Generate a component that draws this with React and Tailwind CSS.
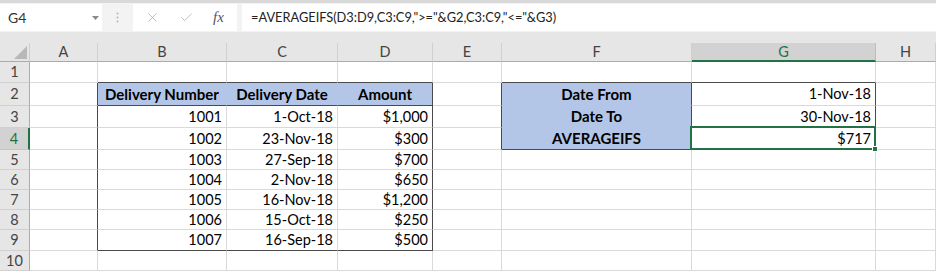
import React from 'react';
import { X, Check } from 'lucide-react';

const COLS = ['A', 'B', 'C', 'D', 'E', 'F', 'G', 'H'];
const COL_W = ['w-[68px]', 'w-[129px]', 'w-[111px]', 'w-[95px]', 'w-[69px]', 'w-[190px]', 'w-[184px]', 'w-[60px]'];
const ROW_H = ['h-[21px]', 'h-[23px]', 'h-[22px]', 'h-[22px]', 'h-[20px]', 'h-[20px]', 'h-[20px]', 'h-[20px]', 'h-[21px]', 'h-[20px]'];

const deliveries = [
  ['1001', '1-Oct-18', '$1,000'],
  ['1002', '23-Nov-18', '$300'],
  ['1003', '27-Sep-18', '$700'],
  ['1004', '2-Nov-18', '$650'],
  ['1005', '16-Nov-18', '$1,200'],
  ['1006', '15-Oct-18', '$250'],
  ['1007', '16-Sep-18', '$500'],
];

// what sits in each cell: text, bold, align, blue fill
const cellAt = (r, c) => {
  if (r === 2 && c >= 1 && c <= 3) {
    return { text: ['Delivery Number', 'Delivery Date', 'Amount'][c - 1], bold: true, align: 'center', fill: true };
  }
  if (r >= 3 && r <= 9 && c >= 1 && c <= 3) {
    return { text: deliveries[r - 3][c - 1], align: 'right' };
  }
  if (r >= 2 && r <= 4 && c === 5) {
    return { text: ['Date From', 'Date To', 'AVERAGEIFS'][r - 2], bold: true, align: 'center', fill: true };
  }
  if (r >= 2 && r <= 4 && c === 6) {
    return { text: ['1-Nov-18', '30-Nov-18', '$717'][r - 2], align: 'right' };
  }
  return { text: '' };
};

// border colours: 'dark' for the table outlines, 'blue' inside filled blocks
const rightEdge = (r, c) => {
  if ((c === 0 || c === 3) && r >= 2 && r <= 9) return 'dark';
  if ((c === 4 || c === 5 || c === 6) && r >= 2 && r <= 4) return 'dark';
  if (r === 2 && (c === 1 || c === 2)) return 'blue';
  return 'grid';
};

const bottomEdge = (r, c) => {
  if ((r === 1 || r === 2 || r === 9) && c >= 1 && c <= 3) return 'dark';
  if ((r === 1 || r === 4) && (c === 5 || c === 6)) return 'dark';
  if ((r === 2 || r === 3) && c === 5) return 'blue';
  return 'grid';
};

const R_CLS = { dark: 'border-r-[#4a4a4a]', blue: 'border-r-[#b4c6e7]', grid: 'border-r-[#d9d9d9]' };
const B_CLS = { dark: 'border-b-[#4a4a4a]', blue: 'border-b-[#b4c6e7]', grid: 'border-b-[#d9d9d9]' };

const FormulaBar = () => (
  <div className="bg-[#e6e6e6]">
    <div className="h-[3px] bg-[#d9d9d9]" />
    <div className="h-[29px] bg-[#f3f3f3] flex items-center text-[14px] text-[#333]">
      <div className="w-[102px] h-[27px] bg-white flex items-center justify-between pl-[8px] pr-[3px]">
        <span>G4</span>
        <svg width="7" height="4" viewBox="0 0 7 4"><polygon points="0,0 7,0 3.5,4" fill="#8a8a8a" /></svg>
      </div>
      <div className="w-[31px] flex justify-center">
        <svg width="3" height="11" viewBox="0 0 3 11">
          <circle cx="1.5" cy="1.5" r="1" fill="#b5b5b5" />
          <circle cx="1.5" cy="5.5" r="1" fill="#b5b5b5" />
          <circle cx="1.5" cy="9.5" r="1" fill="#b5b5b5" />
        </svg>
      </div>
      <div className="w-[104px] h-[27px] bg-white flex items-center pl-[12px] gap-[19px]">
        <X size={15} strokeWidth={1.2} color="#a8a8a8" />
        <Check size={15} strokeWidth={1.2} color="#a8a8a8" />
        <span className="font-['Liberation_Serif',serif] italic text-[15px] text-[#555]">fx</span>
      </div>
      <div className="w-[5px]" />
      <div className="flex-1 h-[27px] bg-white flex items-center pl-[9px] text-[12.8px] text-[#222]">
        =AVERAGEIFS(D3:D9,C3:C9,"&gt;="&amp;G2,C3:C9,"&lt;="&amp;G3)
      </div>
    </div>
    <div className="h-[11px]" />
  </div>
);

const HeaderRow = () => (
  <div className="flex h-[19px] bg-[#e6e6e6] text-[14.5px] text-[#444]">
    <div className="w-[30px] h-full border-r border-b border-r-[#cfcfcf] border-b-[#ababab] relative">
      <svg className="absolute right-[2px] bottom-[2px]" width="13" height="13" viewBox="0 0 13 13">
        <polygon points="13,0 13,13 0,13" fill="#b8b8b8" />
      </svg>
    </div>
    {COLS.map((l, c) =>
      c === 6 ? (
        <div key={l} className={`${COL_W[c]} h-full bg-[#d2d2d2] border-r border-r-[#bdbdbd] border-b-2 border-b-[#217346] text-[#217346] flex items-center justify-center`}>
          {l}
        </div>
      ) : (
        <div key={l} className={`${COL_W[c]} h-full border-r border-b border-r-[#d0d0d0] border-b-[#ababab] flex items-center justify-center`}>
          {l}
        </div>
      )
    )}
  </div>
);

const Row = ({ r }) => (
  <div className={`flex ${ROW_H[r - 1]}`}>
    {r === 4 ? (
      <div className="w-[30px] h-full bg-[#d2d2d2] border-r-2 border-b border-r-[#217346] border-b-[#c6c6c6] text-[#217346] text-[14.5px] flex items-center justify-center">
        {r}
      </div>
    ) : (
      <div className="w-[30px] h-full bg-[#e6e6e6] border-r border-b border-r-[#ababab] border-b-[#d0d0d0] text-[#444] text-[14.5px] flex items-center justify-center">
        {r}
      </div>
    )}
    {COLS.map((l, c) => {
      const cell = cellAt(r, c);
      const selected = r === 4 && c === 6;
      return (
        <div
          key={l}
          className={`${COL_W[c]} h-full border-r border-b ${R_CLS[rightEdge(r, c)]} ${B_CLS[bottomEdge(r, c)]} ${cell.fill ? 'bg-[#b4c6e7] font-bold text-[15px]' : 'bg-white text-[14.5px]'} ${cell.align === 'center' ? 'justify-center' : 'justify-end pr-[4px]'} ${selected ? 'relative' : ''} flex items-center text-black whitespace-nowrap`}
        >
          {cell.text}
          {selected && (
            <div className="absolute -left-[2px] -top-[2px] -right-[1px] -bottom-[1px] border-2 border-[#217346] z-10 pointer-events-none">
              <div className="absolute -right-[4px] -bottom-[4px] w-[6px] h-[6px] bg-[#217346] border border-white" />
            </div>
          )}
        </div>
      );
    })}
  </div>
);

export default function App() {
  return (
    <div className="w-[936px] h-[277px] overflow-hidden bg-white font-['Lato',sans-serif]">
      <FormulaBar />
      <HeaderRow />
      {[1, 2, 3, 4, 5, 6, 7, 8, 9, 10].map((r) => (
        <Row key={r} r={r} />
      ))}
    </div>
  );
}
